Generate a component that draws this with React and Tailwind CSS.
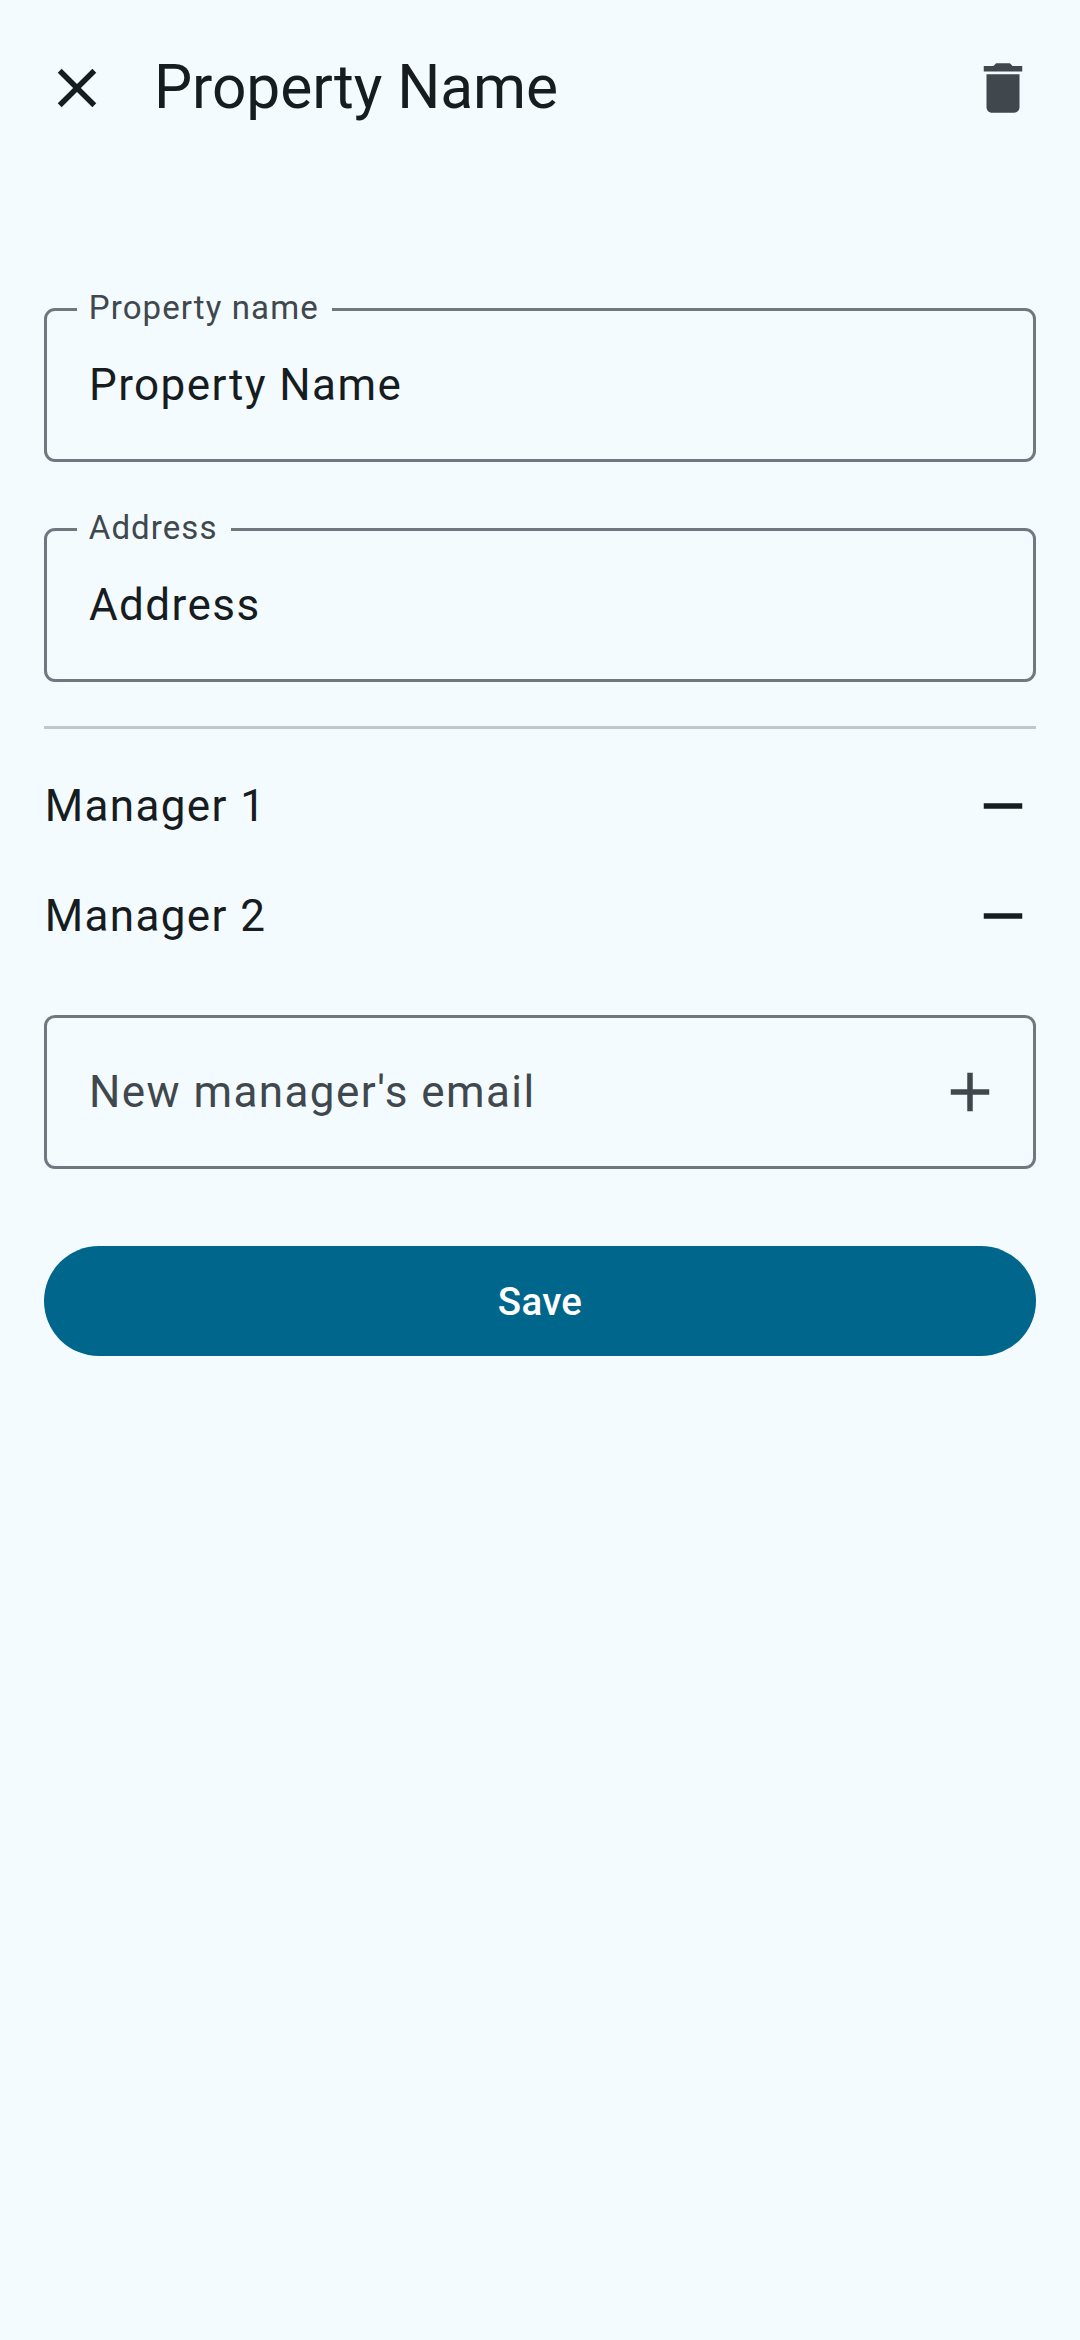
import React from "react";

function Icon({ d, className }) {
  return (
    <svg viewBox="0 0 24 24" className={`size-[66px] shrink-0 fill-current ${className ?? ""}`} aria-hidden="true">
      <path d={d} />
    </svg>
  );
}

const icons = {
  close:
    "M19 6.41L17.59 5 12 10.59 6.41 5 5 6.41 10.59 12 5 17.59 6.41 19 12 13.41 17.59 19 19 17.59 13.41 12z",
  trash:
    "M6 19c0 1.1.9 2 2 2h8c1.1 0 2-.9 2-2V7H6v12zM19 4h-3.5l-1-1h-5l-1 1H5v2h14V4z",
  minus: "M19 13H5v-2h14v2z",
  plus: "M19 13h-6v6h-2v-6H5v-2h6V5h2v6h6v2z",
};

function OutlinedField({ label, value }) {
  return (
    <fieldset className="h-[169px] rounded-[11px] border-[3px] border-[#6f787f] px-[30px]">
      <legend className="h-[33px] pr-[13.25px] pb-[4px] pl-[11.75px] text-[33px] leading-[29px] tracking-[1.1px] text-[#40484e]">
        {label}
      </legend>
      <div className="-mt-[15px] flex h-[148px] items-center px-3 text-[44px] leading-[66px] tracking-[1.42px]">
        {value}
      </div>
    </fieldset>
  );
}

function ManagerRow({ name }) {
  return (
    <li className="flex h-[110px] items-center justify-between">
      <span className="pl-[0.7px] text-[44px] leading-[66px] tracking-[1.375px]">{name}</span>
      <button className="flex size-[66px]" aria-label={`Remove ${name}`}>
        <Icon d={icons.minus} />
      </button>
    </li>
  );
}

export default function App() {
  return (
    <div className="flex h-[2340px] w-[1080px] flex-col bg-[#f3fbff] font-['Roboto',sans-serif] text-[#171c1f]">
      <header className="flex h-44 items-center px-11">
        <button className="flex" aria-label="Close">
          <Icon d={icons.close} />
        </button>
        <h1 className="ml-11 flex-1 pb-[2px] text-[60.5px] leading-[77px] tracking-[-0.1px]">Property Name</h1>
        <button className="flex text-[#40484e]" aria-label="Delete">
          <Icon d={icons.trash} />
        </button>
      </header>

      <main className="flex flex-col px-11 pt-[117px]">
        <div className="flex flex-col gap-[51px]">
          <OutlinedField label="Property name" value="Property Name" />
          <OutlinedField label="Address" value="Address" />
        </div>

        <div className="mt-11 h-[3px] bg-[#c0c7cf]" />

        <ul className="mt-[22px]">
          <ManagerRow name="Manager 1" />
          <ManagerRow name="Manager 2" />
        </ul>

        <div className="mt-11 flex h-[154px] items-center justify-between rounded-[11px] border-[3px] border-[#6f787f] pr-[30px] pl-[42px] text-[#40484e]">
          <span className="text-[44px] leading-[66px] tracking-[1.42px]">New manager's email</span>
          <button className="flex" aria-label="Add manager">
            <Icon d={icons.plus} />
          </button>
        </div>

        <button className="mt-[77px] flex h-[110px] items-center justify-center rounded-full bg-[#00668b] text-[38.5px] leading-[55px] font-medium tracking-[0.275px] text-white">
          Save
        </button>
      </main>
    </div>
  );
}
